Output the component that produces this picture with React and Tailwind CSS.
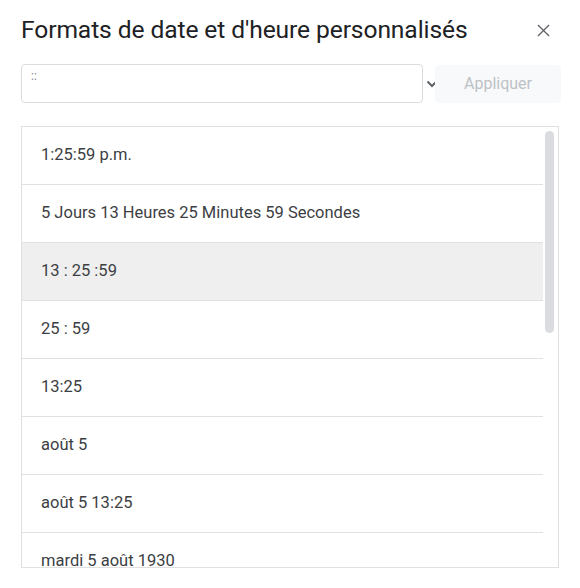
import React from 'react';

const rows = [
  '1:25:59 p.m.',
  '5 Jours 13 Heures 25 Minutes 59 Secondes',
  '13 : 25 :59',
  '25 : 59',
  '13:25',
  'août 5',
  'août 5 13:25',
  'mardi 5 août 1930',
];

export default function App() {
  return (
    <div className="w-[580px] h-[588px] bg-white font-['Roboto',sans-serif] text-[#3c4043]">
      <div className="flex items-center justify-between pl-[21px] pr-[30px] pt-[14px] h-[47px]">
        <h1 className="text-[24.6px] text-[#202124] tracking-[-0.1px]">
          Formats de date et d'heure personnalisés
        </h1>
        <svg width="13" height="13" viewBox="0 0 14 14" className="text-[#5f6368]">
          <path d="M1 1L13 13M13 1L1 13" stroke="currentColor" strokeWidth="1.4" />
        </svg>
      </div>

      <div className="flex items-center pl-[21px] pr-[19px] mt-[17px]">
        <div className="w-[402px] shrink-0 h-[39px] border border-[#dadce0] rounded-[4px] px-[9px] pt-[4px] text-[12px] text-[#80868b] leading-[14px]">
          ::
        </div>
        <svg width="12" height="12" viewBox="0 0 12 12" className="ml-[3px] shrink-0 text-[#5f6368]">
          <path d="M1.5 3.5L6 8L10.5 3.5" stroke="currentColor" strokeWidth="2" fill="none" />
        </svg>
        <button className="ml-[-3px] w-[126px] shrink-0 h-[38px] rounded-[4px] bg-[#f8f9fa] text-[16px] text-[#bdc1c6]">
          Appliquer
        </button>
      </div>

      <div className="relative mx-[21px] mt-[23px] h-[442px] border border-[#e0e0e0] overflow-hidden">
        <div className="pr-[15px]">
          {rows.map((r, i) => (
            <div
              key={i}
              className={`h-[58px] flex items-center pl-[19px] border-b border-[#e0e0e0] text-[16.5px] ${
                i === 2 ? 'bg-[#efefef]' : ''
              }`}
            >
              {r}
            </div>
          ))}
        </div>
        <div className="absolute right-[4px] top-[4px] w-[9px] h-[202px] rounded-full bg-[#dadce0]" />
      </div>
    </div>
  );
}
